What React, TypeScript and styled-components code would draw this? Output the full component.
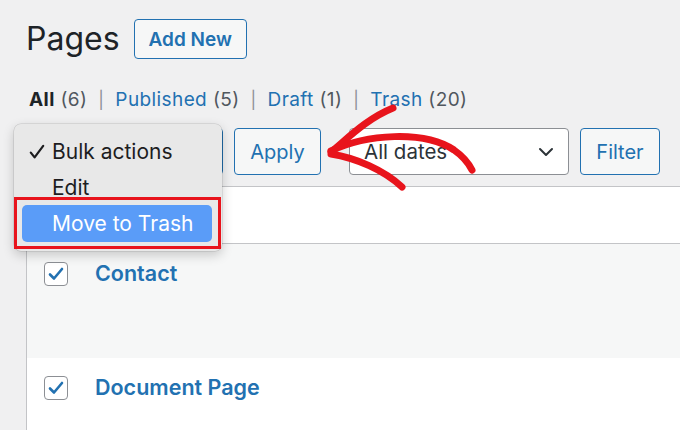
import React from 'react';
import styled, { createGlobalStyle } from 'styled-components';

const GlobalStyle = createGlobalStyle`
  html, body {
    margin: 0;
    padding: 0;
    background: #f0f0f1;
    font-family: Inter, "Liberation Sans", sans-serif;
    color: #1d2327;
  }
`;

const Screen = styled.div`
  position: relative;
  width: 680px;
  height: 430px;
  overflow: hidden;
`;

const Header = styled.div`
  display: flex;
  align-items: center;
  gap: 14px;
  padding: 19px 0 0 26px;
`;

const Title = styled.h1`
  margin: 0;
  font-size: 32px;
  font-weight: 400;
  line-height: 40px;
  color: #1d2327;
`;

const OutlineButton = styled.button<{ $bold?: boolean; $width?: number }>`
  box-sizing: border-box;
  height: ${({ $bold }) => ($bold ? 40 : 47)}px;
  width: ${({ $width }) => ($width ? `${$width}px` : 'auto')};
  padding: 0 14px;
  border: 1.5px solid #2271b1;
  border-radius: 4px;
  background: #f6f7f7;
  color: #2271b1;
  font-family: Inter, "Liberation Sans", sans-serif;
  font-size: ${({ $bold }) => ($bold ? 19 : 20)}px;
  font-weight: ${({ $bold }) => ($bold ? 600 : 400)};
`;

const Views = styled.ul`
  display: flex;
  align-items: center;
  margin: 29px 0 0;
  padding: 0 0 0 29px;
  list-style: none;
  font-size: 19px;
  letter-spacing: 0.4px;
  line-height: 24px;
  color: #50575e;
`;

const ViewItem = styled.li`
  white-space: pre;
`;

const ViewLink = styled.span<{ $current?: boolean }>`
  color: ${({ $current }) => ($current ? '#1d2327' : '#2271b1')};
  font-weight: ${({ $current }) => ($current ? 700 : 400)};
`;

const Sep = styled.span`
  margin: 0 11px;
  color: #8c8f94;
  font-size: 17px;
`;

const TableNav = styled.div`
  display: flex;
  align-items: center;
  margin-top: 16px;
  padding-left: 26px;
`;

const ActionGroup = styled.div`
  display: flex;
  align-items: center;
  gap: 11px;
  & + & {
    margin-left: 28px;
  }
`;

const Select = styled.div<{ $width: number; $focused?: boolean }>`
  box-sizing: border-box;
  display: flex;
  align-items: center;
  justify-content: space-between;
  width: ${({ $width }) => $width}px;
  height: 47px;
  padding: 0 14px;
  background: #fff;
  border: 1.5px solid ${({ $focused }) => ($focused ? '#2271b1' : '#8c8f94')};
  border-radius: 4px;
  font-size: 20.5px;
  color: #2c3338;
`;

const Table = styled.div`
  margin: 11px 0 0 26px;
  width: 700px;
  background: #fff;
  border-top: 1px solid #c3c4c7;
  border-left: 1px solid #c3c4c7;
`;

const Row = styled.div<{ $height: number; $alt?: boolean; $head?: boolean }>`
  box-sizing: border-box;
  display: flex;
  align-items: flex-start;
  gap: 27px;
  height: ${({ $height }) => $height}px;
  padding: 17px 0 0 17px;
  background: ${({ $alt }) => ($alt ? '#f6f7f7' : '#fff')};
  border-bottom: ${({ $head }) => ($head ? '1px solid #c3c4c7' : 'none')};
`;

const Box = styled.span`
  box-sizing: border-box;
  display: flex;
  align-items: center;
  justify-content: center;
  width: 24px;
  height: 24px;
  margin-top: 1px;
  background: #fff;
  border: 1.5px solid #8c8f94;
  border-radius: 4px;
`;

const RowTitle = styled.span`
  font-size: 21.5px;
  line-height: 24px;
  font-weight: 600;
  color: #2271b1;
`;

const Menu = styled.div`
  position: absolute;
  left: 14px;
  top: 124px;
  box-sizing: border-box;
  width: 208px;
  padding: 10px 0 2px;
  background: #e8e8e8;
  border-radius: 7px;
  box-shadow: 0 0 0 0.5px rgba(0, 0, 0, 0.15), 0 4px 12px rgba(0, 0, 0, 0.2);
  font-size: 21px;
  color: #1d1d1f;
`;

const MenuItem = styled.div<{ $height: number; $top?: number }>`
  box-sizing: border-box;
  display: flex;
  align-items: center;
  height: ${({ $height }) => $height}px;
  padding: ${({ $top }) => $top ?? 0}px 0 0 38px;
  position: relative;
`;

const Tick = styled.svg`
  position: absolute;
  left: 15px;
  top: 10px;
`;

const Callout = styled.div`
  margin-right: 1px;
  padding: 5px 6px 4px 5px;
  border: 3px solid #e8141c;
`;

const Highlight = styled.div`
  display: flex;
  align-items: center;
  height: 37px;
  padding-left: 30px;
  background: #5a9cf8;
  border-radius: 5px;
  color: #fff;
`;

const Overlay = styled.svg`
  position: absolute;
  left: 0;
  top: 0;
  pointer-events: none;
`;

const CheckMark = () => (
  <svg width="16" height="14" viewBox="0 0 16 14">
    <path d="M2 7.5 L6 11.5 L14 2" fill="none" stroke="#2271b1" strokeWidth="2.6" strokeLinecap="round" strokeLinejoin="round" />
  </svg>
);

const Chevron = () => (
  <svg width="16" height="10" viewBox="0 0 16 10">
    <path d="M2 2 L8 8 L14 2" fill="none" stroke="#2c3338" strokeWidth="2" strokeLinecap="round" strokeLinejoin="round" />
  </svg>
);

const views = [
  { label: 'All', count: 6, current: true },
  { label: 'Published', count: 5 },
  { label: 'Draft', count: 1 },
  { label: 'Trash', count: 20 },
];

export default function App() {
  return (
    <Screen>
      <GlobalStyle />
      <Header>
        <Title>Pages</Title>
        <OutlineButton $bold>Add New</OutlineButton>
      </Header>

      <Views>
        {views.map((v, i) => (
          <ViewItem key={v.label}>
            {i > 0 && <Sep>|</Sep>}
            <ViewLink $current={v.current}>{v.label}</ViewLink> ({v.count})
          </ViewItem>
        ))}
      </Views>

      <TableNav>
        <ActionGroup>
          {/* the open menu below covers this select */}
          <Select $width={197} $focused />
          <OutlineButton $width={87}>Apply</OutlineButton>
        </ActionGroup>
        <ActionGroup>
          <Select $width={220}>
            All dates
            <Chevron />
          </Select>
          <OutlineButton $width={80}>Filter</OutlineButton>
        </ActionGroup>
      </TableNav>

      <Table>
        <Row $height={57} $head>
          <Box />
        </Row>
        <Row $height={114} $alt>
          <Box>
            <CheckMark />
          </Box>
          <RowTitle>Contact</RowTitle>
        </Row>
        <Row $height={80}>
          <Box>
            <CheckMark />
          </Box>
          <RowTitle>Document Page</RowTitle>
        </Row>
      </Table>

      <Menu>
        <MenuItem $height={35}>
          <Tick width="16" height="16" viewBox="0 0 16 16">
            <path d="M1.8 8.6 L5.6 13.4 L14.2 1.8" fill="none" stroke="#1d1d1f" strokeWidth="2.2" strokeLinecap="round" strokeLinejoin="round" />
          </Tick>
          Bulk actions
        </MenuItem>
        <MenuItem $height={28} $top={8}>
          Edit
        </MenuItem>
        <Callout>
          <Highlight>Move to Trash</Highlight>
        </Callout>
      </Menu>

      <Overlay width="680" height="430" viewBox="0 0 680 430">
        <g fill="none" stroke="#e8141c" strokeWidth="7" strokeLinecap="round" strokeLinejoin="round">
          <path d="M331 151 C 366 134, 424 130, 454 150 C 464 157, 469 164, 472 170" />
          <path d="M331 152 C 347 139, 366 119, 393 108" />
          <path d="M331 154 C 356 158, 384 170, 402 187" />
        </g>
      </Overlay>
    </Screen>
  );
}
